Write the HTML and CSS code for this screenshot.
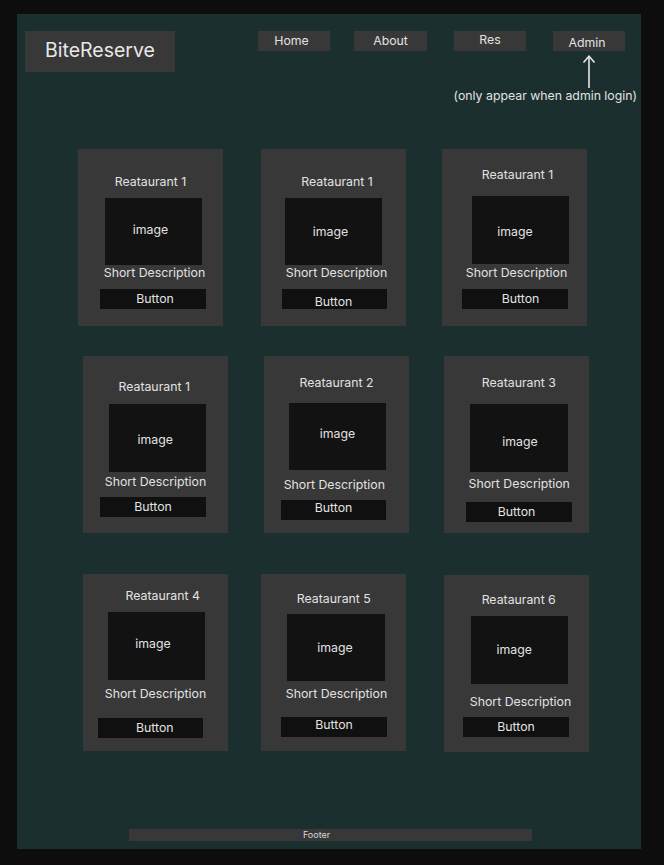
FILE: index.html
```html
<!DOCTYPE html>
<html lang="en">
<head>
<meta charset="utf-8">
<title>BiteReserve</title>
<link rel="stylesheet" href="styles.css">
</head>
<body>
<div class="frame">
  <header class="header">
    <div class="logo"><span>BiteReserve</span></div>
    <nav class="nav">
      <a class="nav__item nav__item--home"><span>Home</span></a>
      <a class="nav__item nav__item--about"><span>About</span></a>
      <a class="nav__item nav__item--res"><span>Res</span></a>
      <div class="nav__admin">
        <a class="nav__item nav__item--admin"><span>Admin</span></a>
        <svg class="nav__arrow" width="14" height="33" viewBox="0 0 14 33" aria-hidden="true">
          <line x1="7" y1="1" x2="7" y2="33" stroke="#e6e6e6" stroke-width="1.6"/>
          <polyline points="1.5,7.5 7,1.2 12.5,7.5" fill="none" stroke="#e6e6e6" stroke-width="1.6" stroke-linejoin="miter"/>
        </svg>
        <p class="nav__note">(only appear when admin login)</p>
      </div>
    </nav>
  </header>

  <main class="grid">
    <div class="row row--1">
      <article class="card card--1">
        <h3 class="card__title">Reataurant 1</h3>
        <div class="card__image"><span>image</span></div>
        <p class="card__desc">Short Description</p>
        <button class="card__btn"><span>Button</span></button>
      </article>
      <article class="card card--2">
        <h3 class="card__title">Reataurant 1</h3>
        <div class="card__image"><span>image</span></div>
        <p class="card__desc">Short Description</p>
        <button class="card__btn"><span>Button</span></button>
      </article>
      <article class="card card--3">
        <h3 class="card__title">Reataurant 1</h3>
        <div class="card__image"><span>image</span></div>
        <p class="card__desc">Short Description</p>
        <button class="card__btn"><span>Button</span></button>
      </article>
    </div>
    <div class="row row--2">
      <article class="card card--4">
        <h3 class="card__title">Reataurant 1</h3>
        <div class="card__image"><span>image</span></div>
        <p class="card__desc">Short Description</p>
        <button class="card__btn"><span>Button</span></button>
      </article>
      <article class="card card--5">
        <h3 class="card__title">Reataurant 2</h3>
        <div class="card__image"><span>image</span></div>
        <p class="card__desc">Short Description</p>
        <button class="card__btn"><span>Button</span></button>
      </article>
      <article class="card card--6">
        <h3 class="card__title">Reataurant 3</h3>
        <div class="card__image"><span>image</span></div>
        <p class="card__desc">Short Description</p>
        <button class="card__btn"><span>Button</span></button>
      </article>
    </div>
    <div class="row row--3">
      <article class="card card--7">
        <h3 class="card__title">Reataurant 4</h3>
        <div class="card__image"><span>image</span></div>
        <p class="card__desc">Short Description</p>
        <button class="card__btn"><span>Button</span></button>
      </article>
      <article class="card card--8">
        <h3 class="card__title">Reataurant 5</h3>
        <div class="card__image"><span>image</span></div>
        <p class="card__desc">Short Description</p>
        <button class="card__btn"><span>Button</span></button>
      </article>
      <article class="card card--9">
        <h3 class="card__title">Reataurant 6</h3>
        <div class="card__image"><span>image</span></div>
        <p class="card__desc">Short Description</p>
        <button class="card__btn"><span>Button</span></button>
      </article>
    </div>
  </main>

  <footer class="footer"><span>Footer</span></footer>
</div>
</body>
</html>
```

FILE: styles.css
```css
* {
  box-sizing: border-box;
}

html, body {
  margin: 0;
  padding: 0;
}

body {
  background: #0d0d0d;
  font-family: Inter, "Noto Sans", "DejaVu Sans", sans-serif;
  color: #e2e2e2;
  width: 664px;
  height: 865px;
  overflow: hidden;
}

.frame {
  margin: 14px 0 0 17px;
  width: 624px;
  height: 835px;
  background: #1b2f2e;
  display: flex;
  flex-direction: column;
}

/* ---------- header ---------- */
.header {
  height: 135px;
  padding-top: 17px;
  display: flex;
  align-items: flex-start;
}

.logo {
  margin-left: 8px;
  width: 150px;
  height: 41px;
  background: #383838;
  display: flex;
  align-items: center;
  justify-content: center;
  padding-bottom: 4px;
  font-size: 19.5px;
  color: #e8e8e8;
}

.nav {
  margin-left: 83px;
  display: flex;
  align-items: flex-start;
}

.nav__item {
  width: 72px;
  height: 20px;
  background: #383838;
  display: flex;
  align-items: center;
  justify-content: center;
  font-size: 12.3px;
  line-height: 16px;
  color: #e2e2e2;
}

.nav__item--home span {
  margin-left: -5px;
}

.nav__item--about {
  width: 73px;
  margin-left: 24px;
}

.nav__item--res {
  margin-left: 27px;
}

.nav__item--res span {
  margin-top: -2px;
}

.nav__admin {
  margin-left: 27px;
  width: 72px;
  display: flex;
  flex-direction: column;
  align-items: center;
}

.nav__item--admin span {
  margin-left: -4px;
  margin-top: 3px;
}

.nav__arrow {
  display: block;
  margin-top: 4px;
}

.nav__note {
  margin: 0 -12px 0 0;
  align-self: flex-end;
  white-space: nowrap;
  font-size: 12.3px;
  line-height: 16px;
  color: #e2e2e2;
}

/* ---------- cards ---------- */
.grid {
  display: flex;
  flex-direction: column;
}

.row {
  display: flex;
  align-items: flex-start;
}

.row--2 {
  margin-top: 30px;
}

.row--3 {
  margin-top: 41px;
}

.card {
  --ml: 0px;
  --mt: 0px;
  --tt: 24px;
  --tx: 0px;
  --it: 8px;
  --il: 24px;
  --iw: 97px;
  --ih: 67px;
  --lx: 0px;
  --ly: 0px;
  --dt: 0px;
  --dx: 0px;
  --bt: 8px;
  --bl: 20px;
  --bw: 106px;
  --bx: 0px;
  --by: 0px;
  width: 145px;
  height: 177px;
  margin-left: var(--ml);
  margin-top: var(--mt);
  background: #383838;
  display: flex;
  flex-direction: column;
}

.card__title {
  margin: var(--tt) calc(-1 * var(--tx)) 0 var(--tx);
  font-size: 12.3px;
  line-height: 16px;
  font-weight: 400;
  text-align: center;
  white-space: nowrap;
  color: #e2e2e2;
}

.card__image {
  align-self: flex-start;
  margin-top: var(--it);
  margin-left: var(--il);
  width: var(--iw);
  height: var(--ih);
  background: #121212;
  display: flex;
  align-items: center;
  justify-content: center;
  font-size: 12.3px;
  line-height: 16px;
  color: #e2e2e2;
}

.card__image span {
  margin-left: calc(var(--lx) * 2);
  margin-top: calc(var(--ly) * 2);
}

.card__desc {
  margin: var(--dt) calc(-1 * var(--dx)) 0 var(--dx);
  font-size: 12.3px;
  line-height: 16px;
  text-align: center;
  white-space: nowrap;
  color: #e2e2e2;
}

.card__btn {
  align-self: flex-start;
  margin-top: var(--bt);
  margin-left: var(--bl);
  width: var(--bw);
  height: 20px;
  padding: 0;
  border: 0;
  background: #101010;
  display: flex;
  align-items: center;
  justify-content: center;
  font-family: Inter, "Noto Sans", "DejaVu Sans", sans-serif;
  font-size: 12.3px;
  line-height: 16px;
  color: #e2e2e2;
}

.card__btn span {
  margin-left: calc(var(--bx) * 2);
  margin-top: calc(var(--by) * 2);
}

.card--1 { --ml: 61px; --tt: 25px; --tx: 0px;  --it: 8px;  --il: 27px; --ih: 67px; --lx: -3px;  --ly: -1.5px; --dt: 0px; --dx: 4px;  --bt: 8px;  --bl: 22px; --bw: 106px; --bx: 2px; --by: 0px; }
.card--2 { --ml: 38px; --tt: 25px; --tx: 3.5px; --it: 8px; --il: 24px; --ih: 67px; --lx: -3px;  --ly: 0px;   --dt: 0px; --dx: 3px;  --bt: 8px;  --bl: 21px; --bw: 105px; --bx: -1px; --by: 3px; }
.card--3 { --ml: 36px; --tt: 18px; --tx: 3px;  --it: 13px; --il: 30px; --ih: 68px; --lx: -5.5px; --ly: 1.5px; --dt: 1px; --dx: 2px;  --bt: 8px;  --bl: 20px; --bw: 106px; --bx: 5.5px; --by: 0px; }

.card--4 { --ml: 66px; --tt: 23px; --tx: -1.3px; --it: 9px; --il: 26px; --ih: 68px; --lx: -2.3px; --ly: 1.7px; --dt: 2px; --dx: 0px;  --bt: 7px;  --bl: 17px; --bw: 106px; --bx: 0px; --by: 0px; }
.card--5 { --ml: 36px; --tt: 19px; --tx: 0px;  --it: 12px; --il: 25px; --ih: 67px; --lx: 0px;   --ly: -3px;  --dt: 7px; --dx: -2.2px; --bt: 7px; --bl: 17px; --bw: 105px; --bx: 0px; --by: -2.5px; }
.card--6 { --ml: 35px; --tt: 19px; --tx: 2.3px; --it: 13px; --il: 26px; --iw: 98px; --ih: 68px; --lx: 1px; --ly: 3.7px; --dt: 4px; --dx: 2.7px; --bt: 10px; --bl: 22px; --bw: 106px; --bx: -2.5px; --by: 0px; }

.card--7 { --ml: 66px; --tt: 14px; --tx: 7.2px; --it: 8px; --il: 25px; --ih: 68px; --lx: -3.5px; --ly: -2px; --dt: 6px; --dx: 0px; --bt: 16px; --bl: 15px; --bw: 105px; --bx: 4.3px; --by: 0px; }
.card--8 { --ml: 33px; --tt: 17px; --tx: 0.3px; --it: 7px; --il: 26px; --iw: 98px; --ih: 67px; --lx: -1px; --ly: 0px; --dt: 5px; --dx: 3px; --bt: 15px; --bl: 20px; --bw: 106px; --bx: 0px; --by: -2.3px; }
.card--9 { --ml: 38px; --mt: 1px; --tt: 17px; --tx: 2.2px; --it: 8px; --il: 27px; --ih: 68px; --lx: -5.3px; --ly: 0px; --dt: 10px; --dx: 4px; --bt: 7px; --bl: 19px; --bw: 106px; --bx: 0px; --by: 0px; }

/* ---------- footer ---------- */
.footer {
  margin-top: 77px;
  margin-left: 112px;
  width: 403px;
  height: 12px;
  background: #383838;
  display: flex;
  align-items: center;
  justify-content: center;
  padding-right: 28px;
  font-size: 9px;
  line-height: 12px;
  color: #d8d8d8;
}
```
